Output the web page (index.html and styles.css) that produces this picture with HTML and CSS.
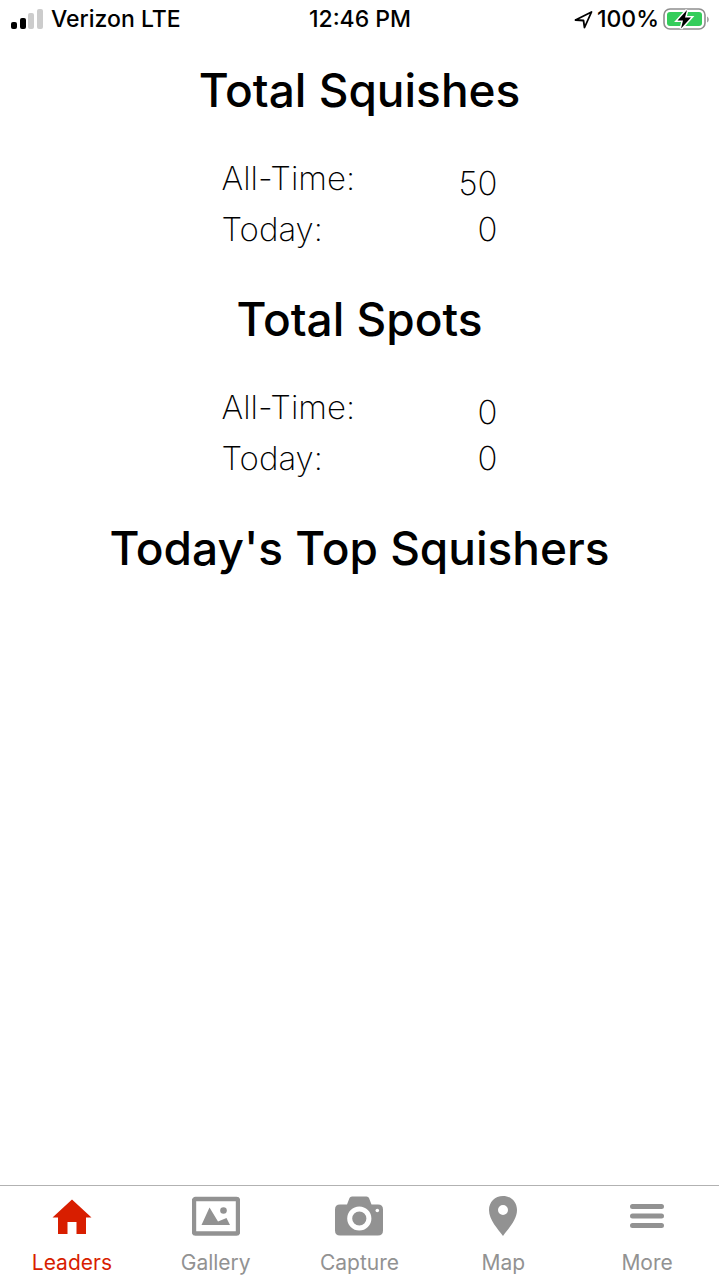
FILE: index.html
```html
<!DOCTYPE html>
<html lang="en">
<head>
    <meta charset="UTF-8">
    <meta name="viewport" content="width=device-width, initial-scale=1.0">
    <title>Leaders</title>
    <link rel="stylesheet" href="styles.css">
</head>
<body>
    <header class="status-bar">
        <div class="status-left">
            <svg class="signal" width="32" height="20" viewBox="0 0 32 20">
                <rect x="0" y="13" width="6" height="7" rx="2" fill="#000"/>
                <rect x="9" y="9" width="6" height="11" rx="2" fill="#000"/>
                <rect x="17" y="4" width="6" height="16" rx="2" fill="#ccc"/>
                <rect x="26" y="0" width="6" height="20" rx="2" fill="#ccc"/>
            </svg>
            <span>Verizon LTE</span>
        </div>
        <div class="status-time">12:46 PM</div>
        <div class="status-right">
            <svg width="20" height="20" viewBox="0 0 20 20">
                <path d="M2.500 11 18.500 3 11.500 18.500 10.500 11.500z" fill="none" stroke="#000" stroke-width="1.800" stroke-linejoin="round"/>
            </svg>
            <span>100%</span>
            <svg width="46" height="24" viewBox="0 0 46 24">
                <rect x="1" y="2" width="41" height="20" rx="6" fill="none" stroke="#8e8e8e" stroke-width="1.600"/>
                <rect x="4" y="5" width="35" height="14" rx="3" fill="#34cd5b"/>
                <path d="M44 9.500v6c2.400-1 2.400-5 0-6z" fill="#a5a5a5"/>
                <path d="M24 3 14.500 13.500h5.500L18 21.500 28 10.500h-6z" fill="#000" stroke="#fff" stroke-width="3" paint-order="stroke"/>
            </svg>
        </div>
    </header>

    <main class="content">
        <section class="block">
            <h1 class="title">Total Squishes</h1>
            <table class="stats">
                <tr>
                    <th scope="row">All-Time:</th>
                    <td class="all-time">50</td>
                </tr>
                <tr>
                    <th scope="row">Today:</th>
                    <td>0</td>
                </tr>
            </table>
        </section>

        <section class="block">
            <h1 class="title">Total Spots</h1>
            <table class="stats">
                <tr>
                    <th scope="row">All-Time:</th>
                    <td class="all-time">0</td>
                </tr>
                <tr>
                    <th scope="row">Today:</th>
                    <td>0</td>
                </tr>
            </table>
        </section>

        <section class="block">
            <h1 class="title">Today's Top Squishers</h1>
        </section>
    </main>

    <nav class="tab-bar">
        <a href="#leaders" class="tab active">
            <svg width="48" height="42" viewBox="0 0 48 42">
                <path d="M24 4.500 4.500 22.500H10V39h9.500V27h9v12H38V22.500h5.500z" fill="currentColor"/>
            </svg>
            <span>Leaders</span>
        </a>
        <a href="#gallery" class="tab">
            <svg width="48" height="42" viewBox="0 0 48 42">
                <rect x="2" y="4" width="44" height="34.500" rx="1.500" fill="none" stroke="currentColor" stroke-width="4.400"/>
                <path d="M9.500 30 17.500 12.500 26 26.500l8.500-3.500 3.500 7z" fill="currentColor"/>
                <circle cx="31.500" cy="15.500" r="3.300" fill="currentColor"/>
            </svg>
            <span>Gallery</span>
        </a>
        <a href="#capture" class="tab">
            <svg width="48" height="42" viewBox="0 0 48 42">
                <path d="M5 9.500h7l2.500-6.500q.6-1.500 2.500-1.500h14.500q1.900 0 2.500 1.500L36.500 9.500H43q5 0 5 5V35.500q0 5-5 5H5q-5 0-5-5V14.500q0-5 5-5z" fill="currentColor"/>
                <circle cx="24.300" cy="23.500" r="9.600" fill="none" stroke="#fff" stroke-width="5"/>
                <circle cx="42.300" cy="15.500" r="1.800" fill="#fff"/>
            </svg>
            <span>Capture</span>
        </a>
        <a href="#map" class="tab">
            <svg width="48" height="42" viewBox="0 0 48 42">
                <path fill-rule="evenodd" d="M24 1C16 1 10 7 10 15c0 10 9 19 14 26 5-7 14-16 14-26C38 7 32 1 24 1zm0 9a5 5 0 1 1 0 10 5 5 0 0 1 0-10z" fill="currentColor"/>
            </svg>
            <span>Map</span>
        </a>
        <a href="#more" class="tab">
            <svg width="48" height="42" viewBox="0 0 48 42">
                <path d="M9.500 11.500h29M9.500 21h29M9.500 30.500h29" stroke="currentColor" stroke-width="5" stroke-linecap="round"/>
            </svg>
            <span>More</span>
        </a>
    </nav>
</body>
</html>
```

FILE: styles.css
```css
* {
    margin: 0;
    padding: 0;
    box-sizing: border-box;
}

body {
    min-height: 100vh;
    display: flex;
    flex-direction: column;
    background: #fff;
    color: #000;
    font-family: Inter, "Liberation Sans", sans-serif;
}

svg {
    display: block;
    flex: none;
}

/* status bar */
.status-bar {
    display: grid;
    grid-template-columns: 1fr auto 1fr;
    align-items: center;
    height: 38px;
    padding: 0 10px 0 11px;
    font-size: 23px;
    font-weight: 500;
}

.status-left,
.status-right {
    display: flex;
    align-items: center;
    gap: 8px;
}

.status-right {
    justify-content: flex-end;
    gap: 4px;
}

/* totals */
.content {
    flex: 1;
    padding-top: 23px;
}

.block {
    margin-bottom: 35px;
}

.title {
    font-size: 46px;
    font-weight: 500;
    line-height: 58px;
    text-align: center;
}

.stats {
    width: 276px;
    margin: 34px auto 0;
    border-collapse: collapse;
    font-size: 33px;
    line-height: 51px;
}

.stats th,
.stats td {
    font-weight: 200;
    text-align: left;
}

.stats td {
    text-align: right;
}

.stats .all-time {
    vertical-align: bottom;
    line-height: 42px;
}

/* bottom tabs */
.tab-bar {
    display: flex;
    height: 94px;
    border-top: 1px solid #b2b2b2;
}

.tab {
    flex: 1;
    display: flex;
    flex-direction: column;
    align-items: center;
    gap: 13px;
    padding-top: 9px;
    color: #929292;
    font-size: 21px;
    line-height: 26px;
    text-decoration: none;
}

.tab.active {
    color: #d81e00;
}
```
